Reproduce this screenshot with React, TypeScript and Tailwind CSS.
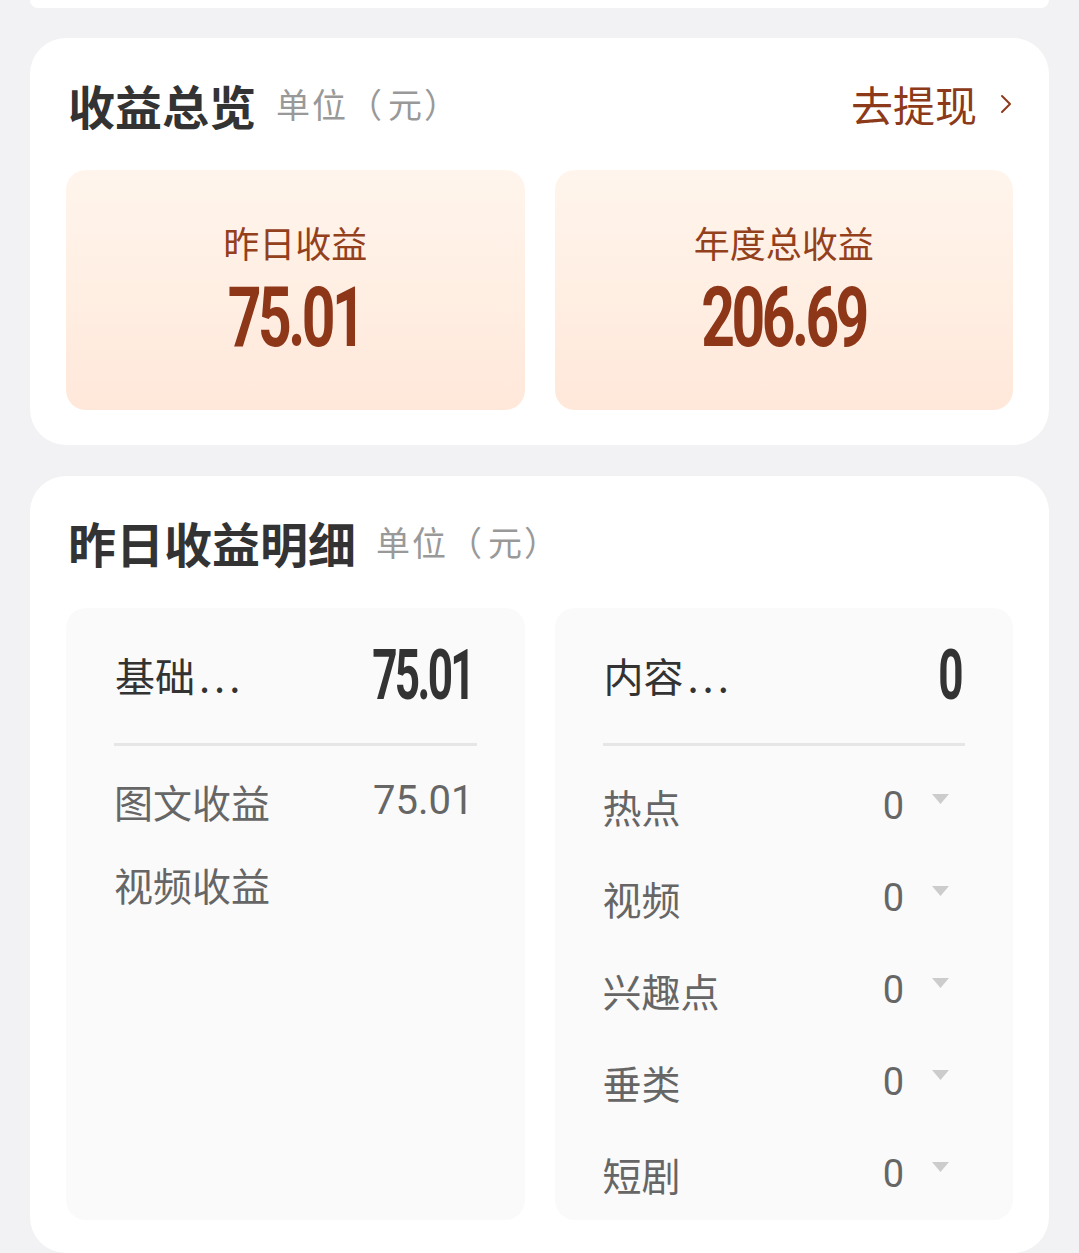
import React from 'react';

const cjk = { fontFamily: '"Noto Sans CJK SC", "Noto Sans", sans-serif' };
const num = { fontFamily: 'Roboto, "Liberation Sans", sans-serif' };

const Chevron: React.FC = () => (
    <svg width="14" height="22" viewBox="0 0 14 22" fill="none">
        <polyline points="3,3 11,11 3,19" stroke="#8d3a1a" strokeWidth="2" strokeLinecap="round" strokeLinejoin="round" />
    </svg>
);

const Caret: React.FC = () => (
    <svg width="17" height="10" viewBox="0 0 17 10">
        <polygon points="0,0 17,0 8.5,10" fill="#cccccc" />
    </svg>
);

const SectionTitle: React.FC<{ title: string; size: string; action?: boolean }> = ({ title, size, action }) => (
    <div className="flex items-center h-[56px] pl-[2px]">
        <span className={`${size} font-bold text-[#333333] leading-none`}>{title}</span>
        <span className="ml-[20px] text-[34px] text-[#999999] leading-none tracking-[2px]">
            单位<span className="tracking-[6px]">（</span>元）
        </span>
        {action && (
            <div className="ml-auto flex items-center gap-[22px] text-[#8d3a1a]">
                <span className="text-[42px] leading-none">去提现</span>
                <Chevron />
            </div>
        )}
    </div>
);

const BigNumber: React.FC<{ value: string }> = ({ value }) => (
    <div className="text-[84px] leading-none font-bold text-[#8d3618] tracking-[-0.06em] scale-x-[0.7]" style={num}>
        {value}
    </div>
);

const SummaryBox: React.FC<{ label: string; value: string }> = ({ label, value }) => (
    <div className="flex-1 h-[240px] rounded-[20px] bg-gradient-to-b from-[#fff5ec] to-[#ffe8da] flex flex-col items-center pt-[52px]">
        <div className="text-[36px] leading-[40px] text-[#93401c]">{label}</div>
        <div className="mt-[14px]">
            <BigNumber value={value} />
        </div>
    </div>
);

interface DetailRow {
    label: string;
    value?: string;
}

const DetailBox: React.FC<{ head: string; total: string; rows: DetailRow[]; caret?: boolean }> = ({ head, total, rows, caret }) => (
    <div className="flex-1 h-[612px] rounded-[20px] bg-[#fafafa] px-[48px] pt-[32px]">
        <div className="flex items-center justify-between h-[70px] pl-[1px]">
            <span className="text-[40px] leading-none text-[#333333]">
                {head}
                <span className="ml-[4px] tracking-[4px]">...</span>
            </span>
            <span
                className="mr-[4px] text-[70px] leading-none font-bold text-[#333333] tracking-[-0.06em] scale-x-[0.63] origin-right"
                style={num}
            >
                {total}
            </span>
        </div>
        <div className="mt-[33px] h-[3px] bg-[#e6e6e6]" />
        <div className={`flex flex-col ${caret ? 'mt-[36px] gap-[44px]' : 'mt-[31px] gap-[35px]'}`}>
            {rows.map((row) => (
                <div key={row.label} className="flex items-center h-[48px]">
                    <span className="text-[39px] leading-none text-[#666666]">{row.label}</span>
                    <span
                        className={`ml-auto leading-none text-[#666666] ${caret ? 'text-[38px]' : 'text-[40px] mr-[3px]'}`}
                        style={num}
                    >
                        {row.value}
                    </span>
                    {caret && (
                        <div className="ml-[28px] mr-[16px] self-start mt-[12px]">
                            <Caret />
                        </div>
                    )}
                </div>
            ))}
        </div>
    </div>
);

const App: React.FC = () => {
    const contentRows: DetailRow[] = [
        { label: '热点', value: '0' },
        { label: '视频', value: '0' },
        { label: '兴趣点', value: '0' },
        { label: '垂类', value: '0' },
        { label: '短剧', value: '0' },
    ];

    return (
        <div className="min-h-[1253px] bg-[#f2f2f4] px-[30px] overflow-hidden" style={cjk}>
            {/* tail of the card above */}
            <div className="h-[8px] bg-white rounded-b-[20px]" />

            <div className="mt-[30px] bg-white rounded-[36px] px-[36px] pt-[38px] pb-[35px]">
                <SectionTitle title="收益总览" size="text-[47px]" action />
                <div className="mt-[38px] flex gap-[30px]">
                    <SummaryBox label="昨日收益" value="75.01" />
                    <SummaryBox label="年度总收益" value="206.69" />
                </div>
            </div>

            <div className="mt-[31px] bg-white rounded-[36px] px-[36px] pt-[38px] pb-[33px]">
                <SectionTitle title="昨日收益明细" size="text-[48px]" />
                <div className="mt-[38px] flex gap-[30px]">
                    <DetailBox
                        head="基础"
                        total="75.01"
                        rows={[
                            { label: '图文收益', value: '75.01' },
                            { label: '视频收益' },
                        ]}
                    />
                    <DetailBox head="内容" total="0" rows={contentRows} caret />
                </div>
            </div>
        </div>
    );
};

export default App;
